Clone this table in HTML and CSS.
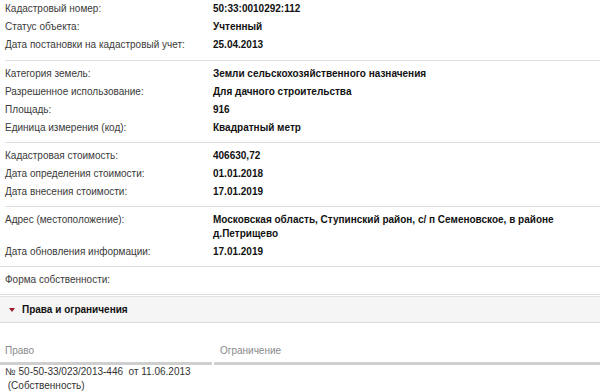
FILE: index.html
```html
<!DOCTYPE html>
<html lang="ru">
<head>
<meta charset="utf-8">
<link rel="stylesheet" href="styles.css">
</head>
<body>
<div class="info">
  <div class="group first inset">
    <div class="row"><div class="label">Кадастровый номер:</div><div class="value">50:33:0010292:112</div></div>
    <div class="row"><div class="label">Статус объекта:</div><div class="value">Учтенный</div></div>
    <div class="row"><div class="label">Дата постановки на кадастровый учет:</div><div class="value">25.04.2013</div></div>
  </div>
  <div class="group inset">
    <div class="row"><div class="label">Категория земель:</div><div class="value">Земли сельскохозяйственного назначения</div></div>
    <div class="row"><div class="label">Разрешенное использование:</div><div class="value">Для дачного строительства</div></div>
    <div class="row"><div class="label">Площадь:</div><div class="value">916</div></div>
    <div class="row"><div class="label">Единица измерения (код):</div><div class="value">Квадратный метр</div></div>
  </div>
  <div class="group inset">
    <div class="row"><div class="label">Кадастровая стоимость:</div><div class="value">406630,72</div></div>
    <div class="row"><div class="label">Дата определения стоимости:</div><div class="value">01.01.2018</div></div>
    <div class="row"><div class="label">Дата внесения стоимости:</div><div class="value">17.01.2019</div></div>
  </div>
  <div class="group">
    <div class="row"><div class="label">Адрес (местоположение):</div><div class="value">Московская область, Ступинский район, с/ п Семеновское, в районе д.Петрищево</div></div>
    <div class="row"><div class="label">Дата обновления информации:</div><div class="value">17.01.2019</div></div>
  </div>
  <div class="group">
    <div class="row"><div class="label">Форма собственности:</div><div class="value"></div></div>
  </div>
</div>
<div class="section-head">
  <span class="caret"></span>
  <span class="section-title">Права и ограничения</span>
</div>
<div class="rights">
  <div class="rights-head">
    <div class="col col-right">Право</div>
    <div class="col col-limit">Ограничение</div>
  </div>
  <div class="rights-row">
    <div class="col col-right">№ 50-50-33/023/2013-446&nbsp; от 11.06.2013<br>&nbsp;(Собственность)</div>
    <div class="col col-limit"></div>
  </div>
</div>
</body>
</html>
```
FILE: styles.css
```css
html, body {
  margin: 0;
  padding: 0;
  background: #ffffff;
}
body {
  font-family: "Liberation Sans", Arial, sans-serif;
  font-size: 10px;
  color: #333333;
  width: 600px;
  height: 392px;
  overflow: hidden;
}
.info {
  display: flex;
  flex-direction: column;
}
.group {
  padding: 4px 0 5px 5px;
  border-bottom: 1px solid #dedede;
}
.group.inset {
  margin-left: 5px;
  padding-left: 0;
}
.group.first {
  padding-top: 0;
  padding-bottom: 6px;
}
.row {
  display: grid;
  grid-template-columns: 208px 1fr;
  padding: 2px 0;
  line-height: 14px;
}
.label {
  color: #3a3a3a;
}
.value {
  font-weight: bold;
  color: #111111;
  padding-right: 40px;
}
.section-head {
  display: flex;
  align-items: center;
  gap: 7px;
  height: 25px;
  padding-left: 9px;
  background: #f5f5f5;
  border-top: 1px solid #e0e0e0;
  margin-top: 1px;
  border-bottom: 1px solid #dcdcdc;
}
.caret {
  width: 0;
  height: 0;
  border-left: 3px solid transparent;
  border-right: 3px solid transparent;
  border-top: 4px solid #9b1c2a;
}
.section-title {
  font-weight: bold;
  color: #111111;
}
.rights {
  padding-top: 21px;
}
.rights-head {
  display: grid;
  grid-template-columns: 212px 1fr;
  column-gap: 2px;
  color: #8a8a8a;
  line-height: 14px;
}
.rights-head .col {
  padding: 0 0 4px 5px;
  border-bottom: 3px solid #cfcfcf;
}
.rights-head .col-limit {
  padding-left: 6px;
}
.rights-row {
  display: grid;
  grid-template-columns: 214px 1fr;
  border-bottom: 1px solid #dedede;
  line-height: 14px;
  padding: 0 0 1px 0;
}
.rights-row .col-right {
  padding-left: 5px;
}
```
